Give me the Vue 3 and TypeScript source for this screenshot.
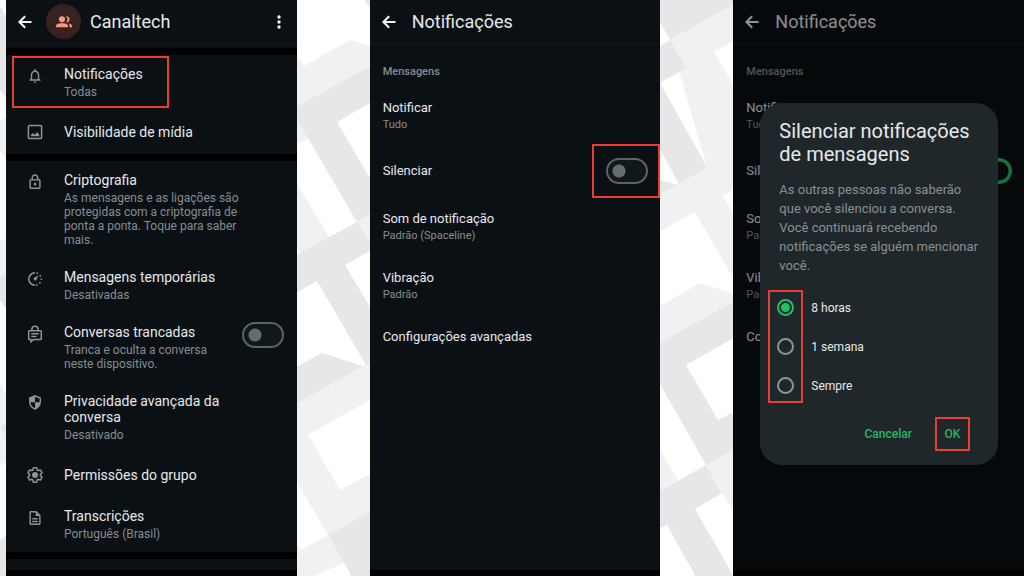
<script setup lang="ts">
import { ref } from 'vue'

interface GroupRow {
  icon: string
  title: string
  detail?: string
  toggle?: boolean
  marked?: boolean
}

interface Setting {
  title: string
  detail?: string
  toggle?: boolean
}

const firstGroup: GroupRow[] = [
  { icon: 'bell', title: 'Notificações', detail: 'Todas', marked: true },
  { icon: 'image', title: 'Visibilidade de mídia' },
]

const secondGroup: GroupRow[] = [
  {
    icon: 'lock',
    title: 'Criptografia',
    detail: 'As mensagens e as ligações são protegidas com a criptografia de ponta a ponta. Toque para saber mais.',
  },
  { icon: 'timer', title: 'Mensagens temporárias', detail: 'Desativadas' },
  { icon: 'chatlock', title: 'Conversas trancadas', detail: 'Tranca e oculta a conversa neste dispositivo.', toggle: true },
  { icon: 'shield', title: 'Privacidade avançada da conversa', detail: 'Desativado' },
  { icon: 'gear', title: 'Permissões do grupo' },
  { icon: 'doc', title: 'Transcrições', detail: 'Português (Brasil)' },
]

const groups = [firstGroup, secondGroup]

const settings: Setting[] = [
  { title: 'Notificar', detail: 'Tudo' },
  { title: 'Silenciar', toggle: true },
  { title: 'Som de notificação', detail: 'Padrão (Spaceline)' },
  { title: 'Vibração', detail: 'Padrão' },
  { title: 'Configurações avançadas' },
]

const screens = [
  { id: 'off', muted: false, dialog: false },
  { id: 'on', muted: true, dialog: true },
]

const durations = ['8 horas', '1 semana', 'Sempre']
const duration = ref('8 horas')

const lightShapes = [
  '297,56 304,66 350,40 370,46 370,66 297,107',
  '296,118 309,138 296,145',
  '296,182 329,237 301,254 296,246',
  '357,222 370,214 370,244',
  '296,404 370,362 370,400 308,435 340,490 370,474 370,511 328,535 296,480',
  '301,550 328,535 344,563 311,577 296,577 296,543',
  '670,40 734,4 734,41 714,52 734,86 734,152 707,167',
  '660,194 734,151 734,189 723,196 734,215 734,279 695,212 660,231',
  '660,306 700,283 734,294 734,301 660,343',
  '660,450 678,480 660,491',
  '706,465 734,449 734,512',
  '0,121 7,117 7,160 0,150',
  '0,241 7,238 7,273 0,277',
  '0,384 7,396 7,462 0,466',
]

const darkShapes = [
  '364,0 370,0 370,8',
  '296,107 370,66 370,103 337,122 370,178 370,214 357,222 296,118',
  '296,255 357,222 370,243 370,251 345,265 370,307 370,362 366,365 317,281 296,293',
  '296,367 322,353 363,366 296,404',
  '328,535 370,511 370,577 352,577',
  '660,0 734,0 734,4 670,40 660,22',
  '660,46 670,40 686,68 660,83',
  '660,83 707,167 679,184 660,149',
  '660,180 677,185 660,194',
  '660,343 734,301 734,338 686,365 718,420 734,412 734,449 706,465 660,384',
  '660,491 706,465 722,493 695,509 734,577 696,577 667,525 660,528',
  '0,6 7,18 7,100 0,90',
  '0,277 7,273 7,310 0,300',
  '0,427 7,424 7,438 0,427',
  '0,540 7,535 7,577 0,577',
]
</script>

<template>
  <main class="stage">
    <svg class="backdrop" viewBox="0 0 1024 576" preserveAspectRatio="none" aria-hidden="true">
      <polygon v-for="p in lightShapes" :key="p" :points="p" fill="#f1f1f1" />
      <polygon v-for="p in darkShapes" :key="p" :points="p" fill="#e7e7e7" />
    </svg>

    <section class="phone" aria-label="Canaltech">
      <header class="bar">
        <button class="back" type="button" aria-label="Voltar">
          <svg viewBox="0 0 14 14"><path d="M13.500 7H1.800M7.200 1.200 1.400 7l5.800 5.800" /></svg>
        </button>
        <span class="avatar">
          <svg viewBox="0 0 24 18">
            <circle cx="9" cy="5" r="4.600" />
            <path d="M0 17v-2.200C0 11.800 4 10.800 9 10.800s9 1 9 4V17zM15 9.400a5.400 5.400 0 0 0 0-8.800 4.500 4.500 0 1 1 0 8.800zM20.300 17v-2.300c0-1.500-.6-2.600-1.900-3.500 3.300.3 5.600 1.300 5.600 3.500V17z" />
          </svg>
        </span>
        <h1 class="name">Canaltech</h1>
        <button class="more" type="button" aria-label="Mais opções">
          <svg viewBox="0 0 4 14"><circle cx="2" cy="2" r="1.700" /><circle cx="2" cy="7" r="1.700" /><circle cx="2" cy="12" r="1.700" /></svg>
        </button>
      </header>

      <div v-for="(group, g) in groups" :key="g" class="group">
        <component
          :is="row.toggle ? 'label' : 'div'"
          v-for="row in group"
          :key="row.title"
          class="row"
          :class="{ single: !row.detail }"
        >
          <svg class="icon" viewBox="0 0 24 24" aria-hidden="true">
            <g v-if="row.icon === 'bell'" transform="translate(.84 .6) scale(.93)">
              <path d="M12 22c1.100 0 2-.9 2-2h-4c0 1.100.9 2 2 2zm6-6v-5c0-3.070-1.630-5.640-4.500-6.320V4c0-.83-.67-1.500-1.500-1.500s-1.500.67-1.500 1.500v.68C7.640 5.360 6 7.920 6 11v5l-2 2v1h16v-1l-2-2zm-2 1H8v-6c0-2.480 1.510-4.500 4-4.500s4 2.020 4 4.500v6z" />
            </g>
            <g v-else-if="row.icon === 'image'">
              <rect class="line" x="3.200" y="3.200" width="17.600" height="17.600" rx="1.500" />
              <path d="M6.500 17.500v-1.300l2.700-3 2.600 2.600 3.200-3.900 2.700 4.200v1.400z" />
            </g>
            <g v-else-if="row.icon === 'lock'" transform="translate(.84 .84) scale(.93)">
              <path d="M18 8h-1V6c0-2.760-2.240-5-5-5S7 3.240 7 6v2H6c-1.100 0-2 .9-2 2v10c0 1.100.9 2 2 2h12c1.100 0 2-.9 2-2V10c0-1.100-.9-2-2-2zM9 6c0-1.660 1.340-3 3-3s3 1.340 3 3v2H9V6zm9 14H6V10h12v10zm-6-3c1.100 0 2-.9 2-2s-.9-2-2-2-2 .9-2 2 .9 2 2 2z" />
            </g>
            <g v-else-if="row.icon === 'timer'">
              <path class="line" d="M12 3.700a8.300 8.300 0 0 0 0 16.600" />
              <path class="line dots" d="M12 3.700a8.300 8.300 0 0 1 0 16.600" />
              <path d="M16.800 7.200l-3.200 6a1.900 1.900 0 1 1-2.800-2.800z" />
            </g>
            <g v-else-if="row.icon === 'chatlock'">
              <path class="line" d="M7.800 7V6a4.200 4.200 0 0 1 8.400 0v1M4.600 7.600h14.800a1 1 0 0 1 1 1v9.800a1 1 0 0 1-1 1H10l-3.400 2.800v-2.800h-2a1 1 0 0 1-1-1V8.600a1 1 0 0 1 1-1zM7 11.500h10M7 15.300h7" />
            </g>
            <g v-else-if="row.icon === 'shield'" transform="translate(1.440 .6) scale(.88)">
              <path d="M12 1L3 4.500V11c0 5.550 3.840 10.740 9 12 5.160-1.260 9-6.450 9-12V4.500zM12 12V3.400l7 2.600v6zm0 0v8.900C8.300 19.700 5.500 16.100 5 12z" />
            </g>
            <g v-else-if="row.icon === 'gear'">
              <path class="line" d="M19.140 12.940c.04-.3.06-.61.06-.94 0-.32-.02-.64-.07-.94l2.030-1.580a.49.49 0 0 0 .12-.61l-1.920-3.320a.488.488 0 0 0-.59-.22l-2.390.96c-.5-.38-1.030-.7-1.620-.94l-.36-2.540a.484.484 0 0 0-.48-.41h-3.840c-.24 0-.43.17-.47.41l-.36 2.540c-.59.24-1.130.57-1.620.94l-2.390-.96c-.22-.08-.47 0-.59.22L2.740 8.870c-.12.21-.08.47.12.61l2.030 1.580c-.05.3-.09.63-.09.94s.02.64.07.94l-2.030 1.580a.49.49 0 0 0-.12.61l1.920 3.320c.12.22.37.29.59.22l2.390-.96c.5.38 1.030.7 1.620.94l.36 2.540c.05.24.24.41.48.41h3.840c.24 0 .44-.17.47-.41l.36-2.540c.59-.24 1.130-.56 1.620-.94l2.390.96c.22.08.47 0 .59-.22l1.920-3.320c.12-.22.07-.47-.12-.61z" />
              <circle cx="12" cy="12" r="4" />
            </g>
            <g v-else transform="translate(.84 .84) scale(.93)">
              <path d="M8 16h8v2H8zm0-4h8v2H8zm6-10H6c-1.100 0-2 .9-2 2v16c0 1.100.89 2 1.990 2H18c1.100 0 2-.9 2-2V8l-6-6zm4 18H6V4h7v5h5v11z" />
            </g>
          </svg>
          <span class="words">
            <span class="title">{{ row.title }}</span>
            <span v-if="row.detail" class="detail">{{ row.detail }}</span>
          </span>
          <input v-if="row.toggle" class="switch" type="checkbox" role="switch" />
          <span v-if="row.marked" class="mark mark-row"></span>
        </component>
      </div>
      <div class="group rest"></div>
    </section>

    <section v-for="screen in screens" :key="screen.id" class="phone compact" aria-label="Notificações">
      <header class="bar">
        <button class="back" type="button" aria-label="Voltar">
          <svg viewBox="0 0 14 14"><path d="M13.500 7H1.800M7.200 1.200 1.400 7l5.800 5.800" /></svg>
        </button>
        <h1 class="name">Notificações</h1>
      </header>
      <div class="list">
        <h2 class="section">Mensagens</h2>
        <component
          :is="item.toggle ? 'label' : 'div'"
          v-for="item in settings"
          :key="item.title"
          class="item"
          :class="{ switchable: item.toggle }"
        >
          <span class="words">
            <span class="title">{{ item.title }}</span>
            <span v-if="item.detail" class="detail">{{ item.detail }}</span>
          </span>
          <span v-if="item.toggle" class="switch-box">
            <input class="switch" type="checkbox" role="switch" :checked="screen.muted" />
            <span v-if="!screen.dialog" class="mark mark-switch"></span>
          </span>
        </component>
      </div>

      <div v-if="screen.dialog" class="scrim">
        <form class="dialog" role="dialog" aria-labelledby="mute-title" @submit.prevent>
          <h2 id="mute-title" class="dialog-title">Silenciar notificações de mensagens</h2>
          <p class="dialog-text">
            As outras pessoas não saberão que você silenciou a conversa. Você continuará recebendo notificações se alguém mencionar você.
          </p>
          <div class="options">
            <label v-for="d in durations" :key="d" class="option">
              <input v-model="duration" class="radio" type="radio" name="duration" :value="d" />
              <span>{{ d }}</span>
            </label>
            <span class="mark mark-options"></span>
          </div>
          <div class="actions">
            <button class="action" type="button">Cancelar</button>
            <button class="action ok" type="submit">OK<span class="mark mark-ok"></span></button>
          </div>
        </form>
      </div>
    </section>
  </main>
</template>

<style>
body {
  margin: 0;
  background: #fff;
}
</style>

<style scoped>
.stage {
  position: relative;
  display: grid;
  grid-template-columns: repeat(3, 1fr);
  gap: 73px;
  min-height: 100vh;
  padding-left: 6px;
  box-sizing: border-box;
  overflow: hidden;
  font-family: Roboto, "Liberation Sans", sans-serif;
  color: #e6e9eb;
}

.backdrop {
  position: absolute;
  inset: 0;
  width: 100%;
  height: 100%;
}

.phone {
  position: relative;
  display: flex;
  flex-direction: column;
  background: #0b1014;
  border-bottom: 6px solid #000;
}

.bar {
  display: flex;
  align-items: center;
  height: 43px;
  padding: 0 13px 0 12px;
  border-bottom: 1px solid #11171b;
}

.back,
.more {
  display: flex;
  padding: 0;
  border: 0;
  background: none;
  color: #f1f4f5;
}

.back svg {
  width: 14px;
  height: 14px;
  fill: none;
  stroke: currentColor;
  stroke-width: 2;
}

.more {
  margin-left: auto;
  margin-right: 3px;
}

.more svg {
  width: 4px;
  height: 14px;
  fill: currentColor;
}

.avatar {
  display: flex;
  align-items: center;
  justify-content: center;
  width: 35px;
  height: 35px;
  margin-left: 14px;
  border-radius: 50%;
  background: #37221f;
}

.avatar svg {
  width: 16px;
  height: 12px;
  fill: #f9987b;
}

.name {
  margin: 0 0 0 9px;
  font-size: 18px;
  line-height: 24px;
  font-weight: 400;
}

.compact .name {
  margin-left: 16px;
}

.group {
  border-bottom: 7px solid #000;
}

.bar + .group {
  margin-top: 4px;
  border-top: 7px solid #000;
}

.rest {
  flex: 1;
  border-bottom: 0;
}

.row {
  position: relative;
  display: flex;
  align-items: flex-start;
  padding: 11px 13px 11px 20px;
}

.row.single {
  align-items: center;
  padding-top: 14px;
  padding-bottom: 14px;
}

.icon {
  flex: none;
  width: 18px;
  height: 18px;
  margin: 1px 20px 0 0;
  fill: #8d9498;
}

.single .icon {
  margin: -1px 20px -1px 0;
}

.line {
  fill: none;
  stroke: #8d9498;
  stroke-width: 2;
}

.dots {
  stroke-dasharray: 2 3;
  stroke-dashoffset: -2;
}

.words {
  flex: 1;
  min-width: 0;
  padding-right: 30px;
}

.title,
.detail {
  display: block;
}

.title {
  font-size: 14px;
  line-height: 16px;
}

.detail {
  margin-top: 3px;
  font-size: 12px;
  line-height: 14px;
  color: #868d91;
}

.switch {
  appearance: none;
  display: block;
  flex: none;
  width: 42px;
  height: 26px;
  margin: 0;
  border: 2px solid #5d6468;
  border-radius: 13px;
  background: radial-gradient(circle 7px at 11px 11px, #666d72 6px, transparent 7px) #11181b;
}

.switch:checked {
  border-color: #21c063;
  border-width: 3px;
  background: radial-gradient(circle 10px at 26px 10px, #0b1014 9px, transparent 10px) #21c063;
}

.row .switch {
  margin-top: -2px;
}

.mark {
  position: absolute;
  border: 2px solid #e83f32;
  pointer-events: none;
}

.mark-row {
  inset: 1px 128px 2px 6px;
}

.mark-switch {
  inset: -14px -12px -14px -14px;
}

.mark-options {
  inset: 2px auto 2px -11px;
  width: 31px;
}

.mark-ok {
  inset: 0;
}

.list {
  padding: 20px 12px 0 13px;
}

.section {
  margin: 0 0 7px;
  font-size: 11px;
  line-height: 16px;
  font-weight: 500;
  color: #868d91;
}

.item {
  display: flex;
  align-items: center;
  padding: 13px 0 14px;
}

.item.switchable {
  padding: 12px 0 14px;
}

.item .title {
  font-size: 13px;
}

.item .detail {
  margin-top: 2px;
  font-size: 11px;
}

.switch-box {
  position: relative;
}

.scrim {
  position: absolute;
  inset: 0;
  display: flex;
  align-items: center;
  justify-content: center;
  padding: 0 26px 2px 27px;
  background: rgba(0, 0, 0, 0.4);
}

.dialog {
  width: 100%;
  box-sizing: border-box;
  padding: 17px 19px 14px;
  border-radius: 22px;
  background: #20272a;
}

.dialog-title {
  margin: 0 0 14px;
  font-size: 20px;
  line-height: 23px;
  font-weight: 400;
}

.dialog-text {
  margin: 0 0 13px;
  font-size: 13px;
  line-height: 19px;
  color: #899093;
}

.options {
  position: relative;
  margin-bottom: 12px;
}

.option {
  display: flex;
  align-items: center;
  gap: 17px;
  height: 39px;
  font-size: 12px;
}

.radio {
  appearance: none;
  width: 17px;
  height: 17px;
  margin: 0 0 0 -2px;
  border: 2px solid #8d9498;
  border-radius: 50%;
}

.radio:checked {
  border-color: #21c063;
  background: radial-gradient(circle, #21c063 4px, transparent 5px);
}

.actions {
  display: flex;
  justify-content: flex-end;
  gap: 23px;
  padding-right: 9px;
}

.action {
  position: relative;
  height: 34px;
  padding: 0;
  border: 0;
  background: none;
  color: #26b564;
  font: 500 12px/16px Roboto, "Liberation Sans", sans-serif;
}

.ok {
  width: 35px;
}
</style>
